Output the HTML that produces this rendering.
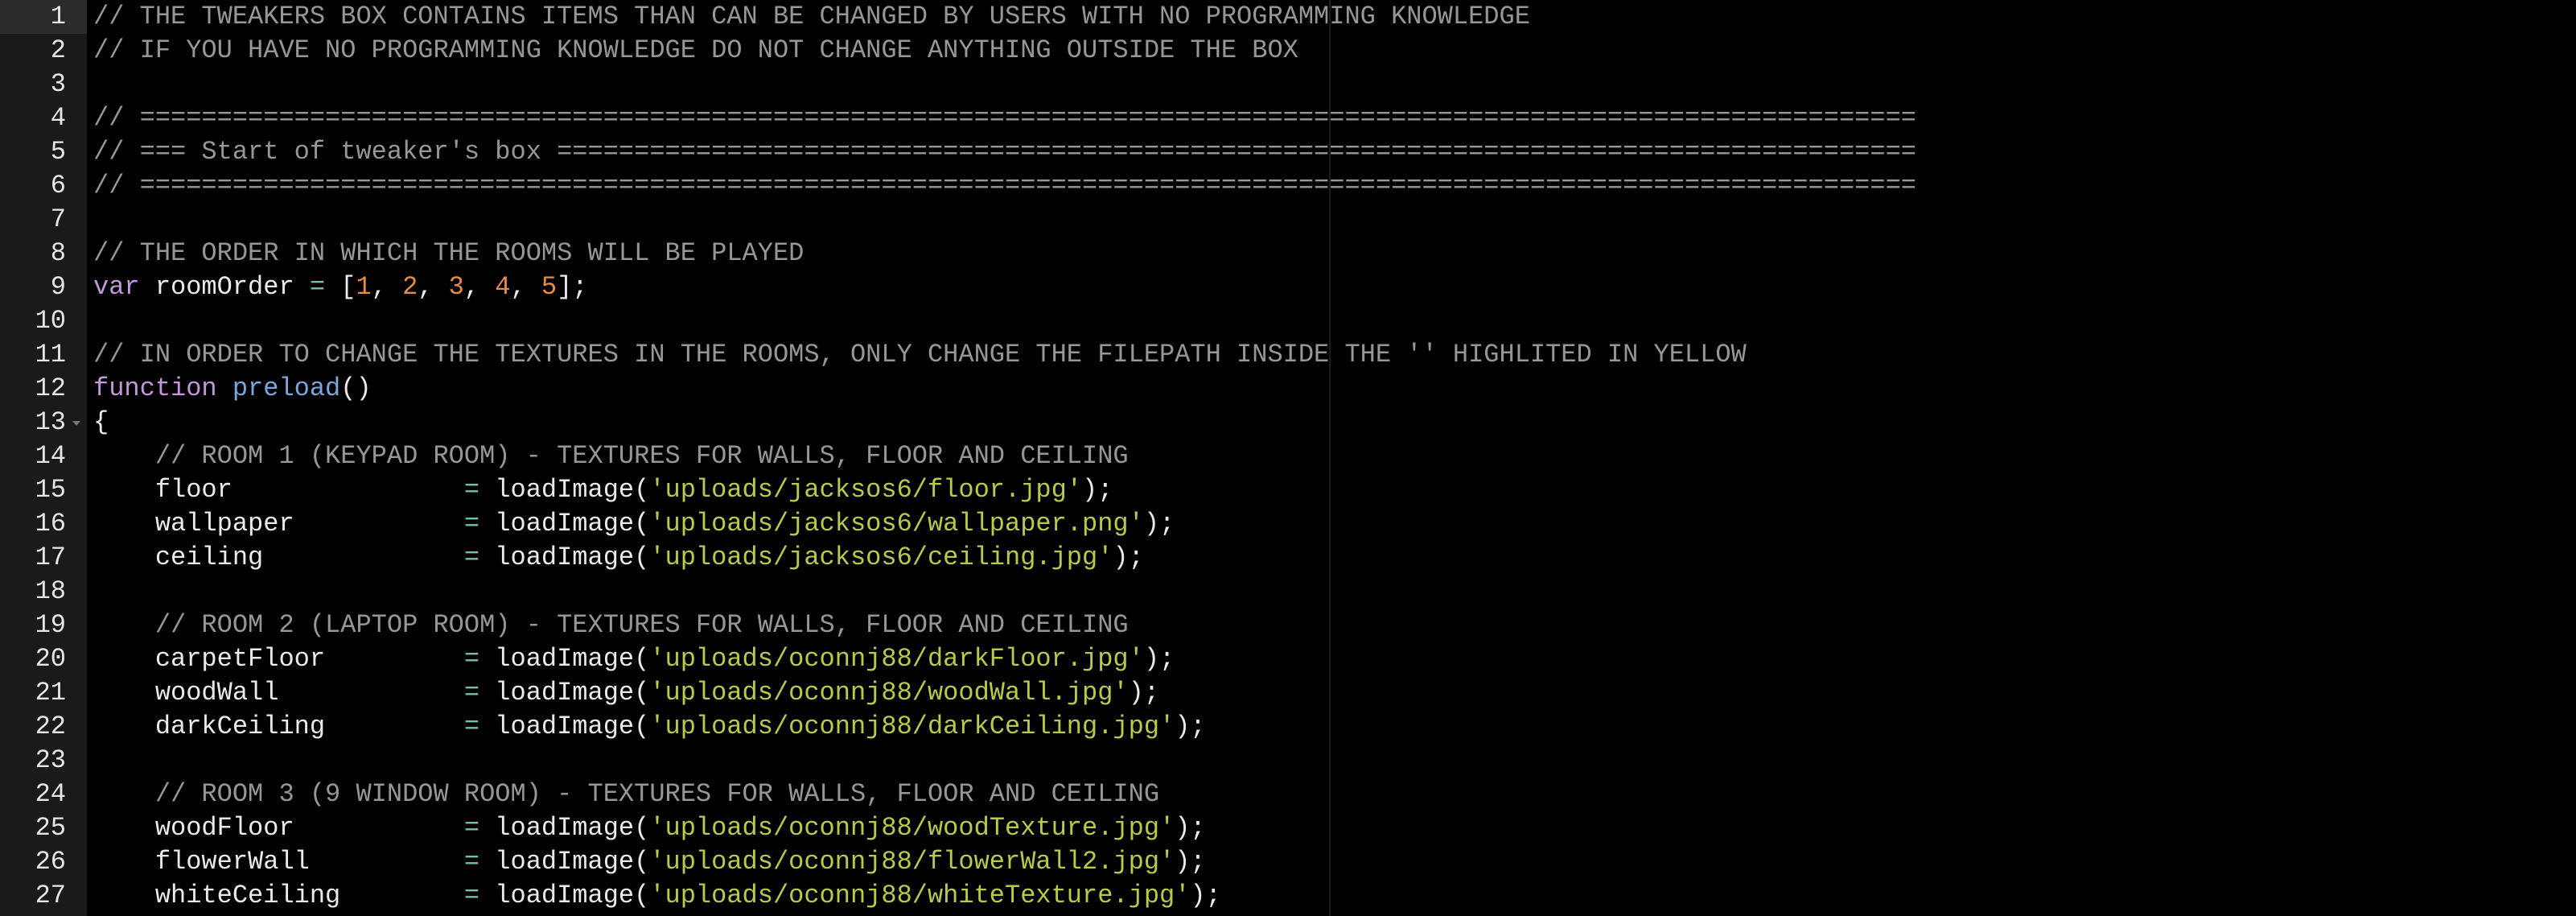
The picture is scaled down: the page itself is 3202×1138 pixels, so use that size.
<!DOCTYPE html>
<html><head><meta charset="utf-8"><style>
html,body{margin:0;padding:0;background:#000;width:3202px;height:1138px;overflow:hidden}
#g{position:absolute;left:0;top:0;width:108px;height:1138px;background:#1a1a1a}
#hl{position:absolute;left:0;top:0;width:108px;height:42px;background:#2c2c2c}
#m{position:absolute;left:1652px;top:0;width:2px;height:1138px;background:#1c1c1c}
.ln{position:absolute;left:0;width:82px;text-align:right;color:#e6e6e6}
.c{position:absolute;left:116px;white-space:pre;color:#eaeaea}
.ln,.c{font-family:"Liberation Mono",monospace;font-size:32px;line-height:42px;height:42px}
.cm{color:#969896}.k{color:#c397d8}.n{color:#e78c45}.s{color:#b9ca4a}.o{color:#70c0b1}.f{color:#7aa6da}
#fold{position:absolute;left:90px;top:523px;width:0;height:0;border-left:5px solid transparent;border-right:5px solid transparent;border-top:6px solid #777}
</style></head><body>
<div id="g"></div><div id="hl"></div><div id="m"></div><div id="fold"></div>
<div class="ln" style="top:0">1</div><div class="ln" style="top:42px">2</div><div class="ln" style="top:84px">3</div><div class="ln" style="top:126px">4</div><div class="ln" style="top:168px">5</div><div class="ln" style="top:210px">6</div><div class="ln" style="top:252px">7</div><div class="ln" style="top:294px">8</div><div class="ln" style="top:336px">9</div><div class="ln" style="top:378px">10</div><div class="ln" style="top:420px">11</div><div class="ln" style="top:462px">12</div><div class="ln" style="top:504px">13</div><div class="ln" style="top:546px">14</div><div class="ln" style="top:588px">15</div><div class="ln" style="top:630px">16</div><div class="ln" style="top:672px">17</div><div class="ln" style="top:714px">18</div><div class="ln" style="top:756px">19</div><div class="ln" style="top:798px">20</div><div class="ln" style="top:840px">21</div><div class="ln" style="top:882px">22</div><div class="ln" style="top:924px">23</div><div class="ln" style="top:966px">24</div><div class="ln" style="top:1008px">25</div><div class="ln" style="top:1050px">26</div><div class="ln" style="top:1092px">27</div>
<div class="c cm" style="top:0">// THE TWEAKERS BOX CONTAINS ITEMS THAN CAN BE CHANGED BY USERS WITH NO PROGRAMMING KNOWLEDGE</div>
<div class="c cm" style="top:42px">// IF YOU HAVE NO PROGRAMMING KNOWLEDGE DO NOT CHANGE ANYTHING OUTSIDE THE BOX</div>
<div class="c cm" style="top:126px">// ===================================================================================================================</div>
<div class="c cm" style="top:168px">// === Start of tweaker's box ========================================================================================</div>
<div class="c cm" style="top:210px">// ===================================================================================================================</div>
<div class="c cm" style="top:294px">// THE ORDER IN WHICH THE ROOMS WILL BE PLAYED</div>
<div class="c" style="top:336px"><span class="k">var</span> roomOrder <span class="o">=</span> [<span class="n">1</span>, <span class="n">2</span>, <span class="n">3</span>, <span class="n">4</span>, <span class="n">5</span>];</div>
<div class="c cm" style="top:420px">// IN ORDER TO CHANGE THE TEXTURES IN THE ROOMS, ONLY CHANGE THE FILEPATH INSIDE THE '' HIGHLITED IN YELLOW</div>
<div class="c" style="top:462px"><span class="k">function</span> <span class="f">preload</span>()</div>
<div class="c" style="top:504px">{</div>
<div class="c cm" style="top:546px">    // ROOM 1 (KEYPAD ROOM) - TEXTURES FOR WALLS, FLOOR AND CEILING</div>
<div class="c" style="top:588px">    floor               <span class="o">=</span> loadImage(<span class="s">'uploads/jacksos6/floor.jpg'</span>);</div>
<div class="c" style="top:630px">    wallpaper           <span class="o">=</span> loadImage(<span class="s">'uploads/jacksos6/wallpaper.png'</span>);</div>
<div class="c" style="top:672px">    ceiling             <span class="o">=</span> loadImage(<span class="s">'uploads/jacksos6/ceiling.jpg'</span>);</div>
<div class="c cm" style="top:756px">    // ROOM 2 (LAPTOP ROOM) - TEXTURES FOR WALLS, FLOOR AND CEILING</div>
<div class="c" style="top:798px">    carpetFloor         <span class="o">=</span> loadImage(<span class="s">'uploads/oconnj88/darkFloor.jpg'</span>);</div>
<div class="c" style="top:840px">    woodWall            <span class="o">=</span> loadImage(<span class="s">'uploads/oconnj88/woodWall.jpg'</span>);</div>
<div class="c" style="top:882px">    darkCeiling         <span class="o">=</span> loadImage(<span class="s">'uploads/oconnj88/darkCeiling.jpg'</span>);</div>
<div class="c cm" style="top:966px">    // ROOM 3 (9 WINDOW ROOM) - TEXTURES FOR WALLS, FLOOR AND CEILING</div>
<div class="c" style="top:1008px">    woodFloor           <span class="o">=</span> loadImage(<span class="s">'uploads/oconnj88/woodTexture.jpg'</span>);</div>
<div class="c" style="top:1050px">    flowerWall          <span class="o">=</span> loadImage(<span class="s">'uploads/oconnj88/flowerWall2.jpg'</span>);</div>
<div class="c" style="top:1092px">    whiteCeiling        <span class="o">=</span> loadImage(<span class="s">'uploads/oconnj88/whiteTexture.jpg'</span>);</div>
</body></html>
